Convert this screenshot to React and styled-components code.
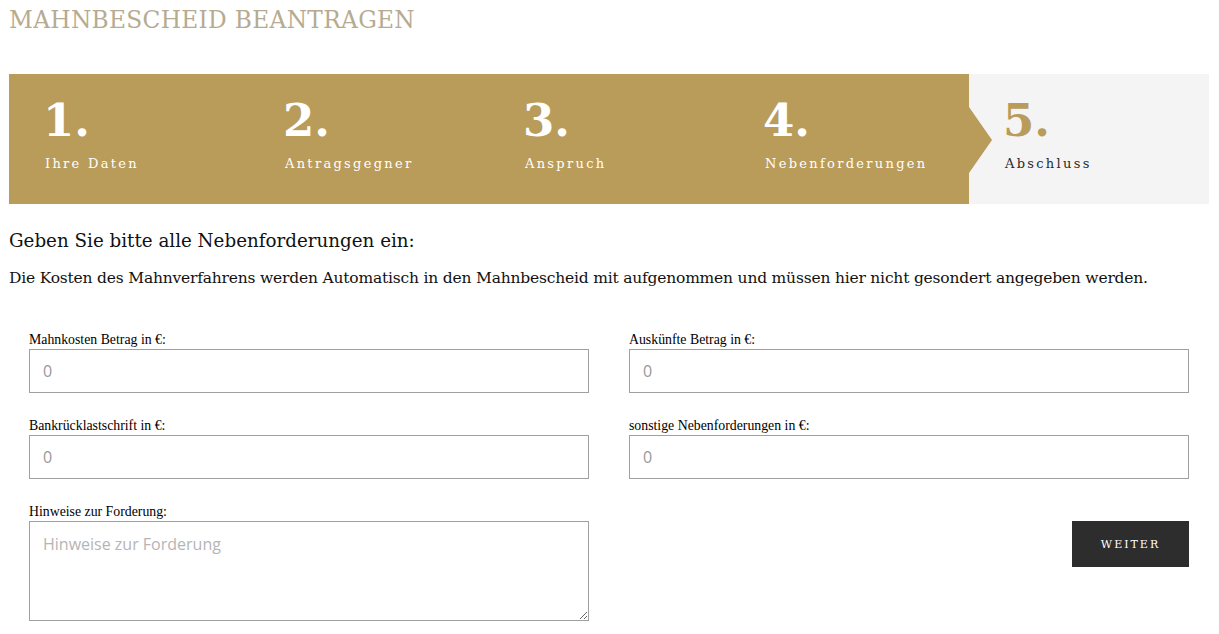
import React from "react";
import styled, { createGlobalStyle } from "styled-components";

const GlobalStyle = createGlobalStyle`
  html, body {
    margin: 0;
    padding: 0;
    background: #ffffff;
  }
  body {
    font-family: "DejaVu Serif", "Liberation Serif", serif;
    color: #111;
  }
  * {
    box-sizing: border-box;
  }
`;

const steps = [
  { num: "1.", label: "Ihre Daten" },
  { num: "2.", label: "Antragsgegner" },
  { num: "3.", label: "Anspruch" },
  { num: "4.", label: "Nebenforderungen", current: true },
  { num: "5.", label: "Abschluss", todo: true },
];

const fields = [
  { label: "Mahnkosten Betrag in €:", value: "0" },
  { label: "Auskünfte Betrag in €:", value: "0" },
  { label: "Bankrücklastschrift in €:", value: "0" },
  { label: "sonstige Nebenforderungen in €:", value: "0" },
];

export default function App() {
  return (
    <>
      <GlobalStyle />
      <Page>
        <Title>MAHNBESCHEID BEANTRAGEN</Title>
        <Stepper>
          {steps.map((s) => (
            <Step key={s.num} $todo={s.todo} $current={s.current}>
              <StepNum $todo={s.todo}>{s.num}</StepNum>
              <StepLabel $todo={s.todo}>{s.label}</StepLabel>
              {s.current && <Arrow />}
            </Step>
          ))}
        </Stepper>

        <Heading>Geben Sie bitte alle Nebenforderungen ein:</Heading>
        <Intro>
          Die Kosten des Mahnverfahrens werden Automatisch in den Mahnbescheid
          mit aufgenommen und müssen hier nicht gesondert angegeben werden.
        </Intro>

        <Form>
          {fields.map((f) => (
            <Field key={f.label}>
              <Label>{f.label}</Label>
              <Input placeholder={f.value} />
            </Field>
          ))}
          <Field>
            <Label>Hinweise zur Forderung:</Label>
            <TextArea placeholder="Hinweise zur Forderung" />
          </Field>
          <ButtonCell>
            <NextButton>WEITER</NextButton>
          </ButtonCell>
        </Form>
      </Page>
    </>
  );
}

const Page = styled.div`
  padding: 0 10px 0 9px;
  width: 1219px;
`;

const Title = styled.h1`
  margin: 0;
  padding-top: 6px;
  height: 74px;
  font-family: "DejaVu Serif", serif;
  font-weight: normal;
  font-size: 23.3px;
  letter-spacing: 0.3px;
  color: #b6ab90;
`;

const Stepper = styled.div`
  display: grid;
  grid-template-columns: repeat(5, 1fr);
  height: 130px;
  background: #b99b5a;
`;

const Step = styled.div`
  position: relative;
  z-index: ${(p) => (p.$current ? 2 : 1)};
  display: flex;
  flex-direction: column;
  padding: 20px 0 0 34px;
  background: ${(p) => (p.$todo ? "#f4f4f5" : "transparent")};
`;

const StepNum = styled.div`
  font-family: "DejaVu Serif", serif;
  font-weight: bold;
  font-size: 45px;
  line-height: 54px;
  color: ${(p) => (p.$todo ? "#b99b5a" : "#ffffff")};
`;

const StepLabel = styled.div`
  margin-top: 8px;
  padding-left: 2px;
  font-family: "DejaVu Serif", serif;
  font-size: 13px;
  letter-spacing: 2.3px;
  color: ${(p) => (p.$todo ? "#2a2a2a" : "#ffffff")};
`;

const Arrow = styled.span`
  position: absolute;
  right: -23px;
  top: 33px;
  width: 0;
  height: 0;
  border-top: 33px solid transparent;
  border-bottom: 33px solid transparent;
  border-left: 23px solid #b99b5a;
`;

const Heading = styled.h2`
  margin: 26px 0 0;
  font-family: "DejaVu Serif", serif;
  font-weight: normal;
  font-size: 18.3px;
  line-height: 22px;
  color: #111;
`;

const Intro = styled.p`
  margin: 16px 0 0;
  font-family: "DejaVu Serif", serif;
  font-size: 15.5px;
  line-height: 20px;
  letter-spacing: -0.2px;
  color: #111;
`;

const Form = styled.div`
  display: grid;
  grid-template-columns: 560px 560px;
  column-gap: 40px;
  row-gap: 25px;
  padding: 44px 20px 0 20px;
`;

const Field = styled.div`
  display: flex;
  flex-direction: column;
`;

const Label = styled.label`
  font-family: "Liberation Serif", serif;
  font-size: 13.8px;
  line-height: 15px;
  color: #000;
  margin-bottom: 2px;
`;

const Input = styled.input`
  height: 44px;
  width: 100%;
  border: 1px solid #a0a0a0;
  padding: 0 13px;
  font-family: "Open Sans", sans-serif;
  font-size: 16px;
  color: #333;
  outline: none;
  &::placeholder {
    color: #999;
  }
`;

const TextArea = styled.textarea`
  height: 100px;
  width: 100%;
  border: 1px solid #a0a0a0;
  padding: 11px 13px;
  font-family: "Open Sans", sans-serif;
  font-size: 16px;
  color: #333;
  outline: none;
  resize: vertical;
  &::placeholder {
    color: #b5b5b5;
  }
`;

const ButtonCell = styled.div`
  display: flex;
  justify-content: flex-end;
  align-items: flex-start;
  padding-top: 17px;
`;

const NextButton = styled.button`
  width: 117px;
  height: 46px;
  border: none;
  background: #2d2d2d;
  color: #ffffff;
  font-family: "DejaVu Serif", serif;
  font-size: 11px;
  letter-spacing: 2px;
  cursor: pointer;
`;
